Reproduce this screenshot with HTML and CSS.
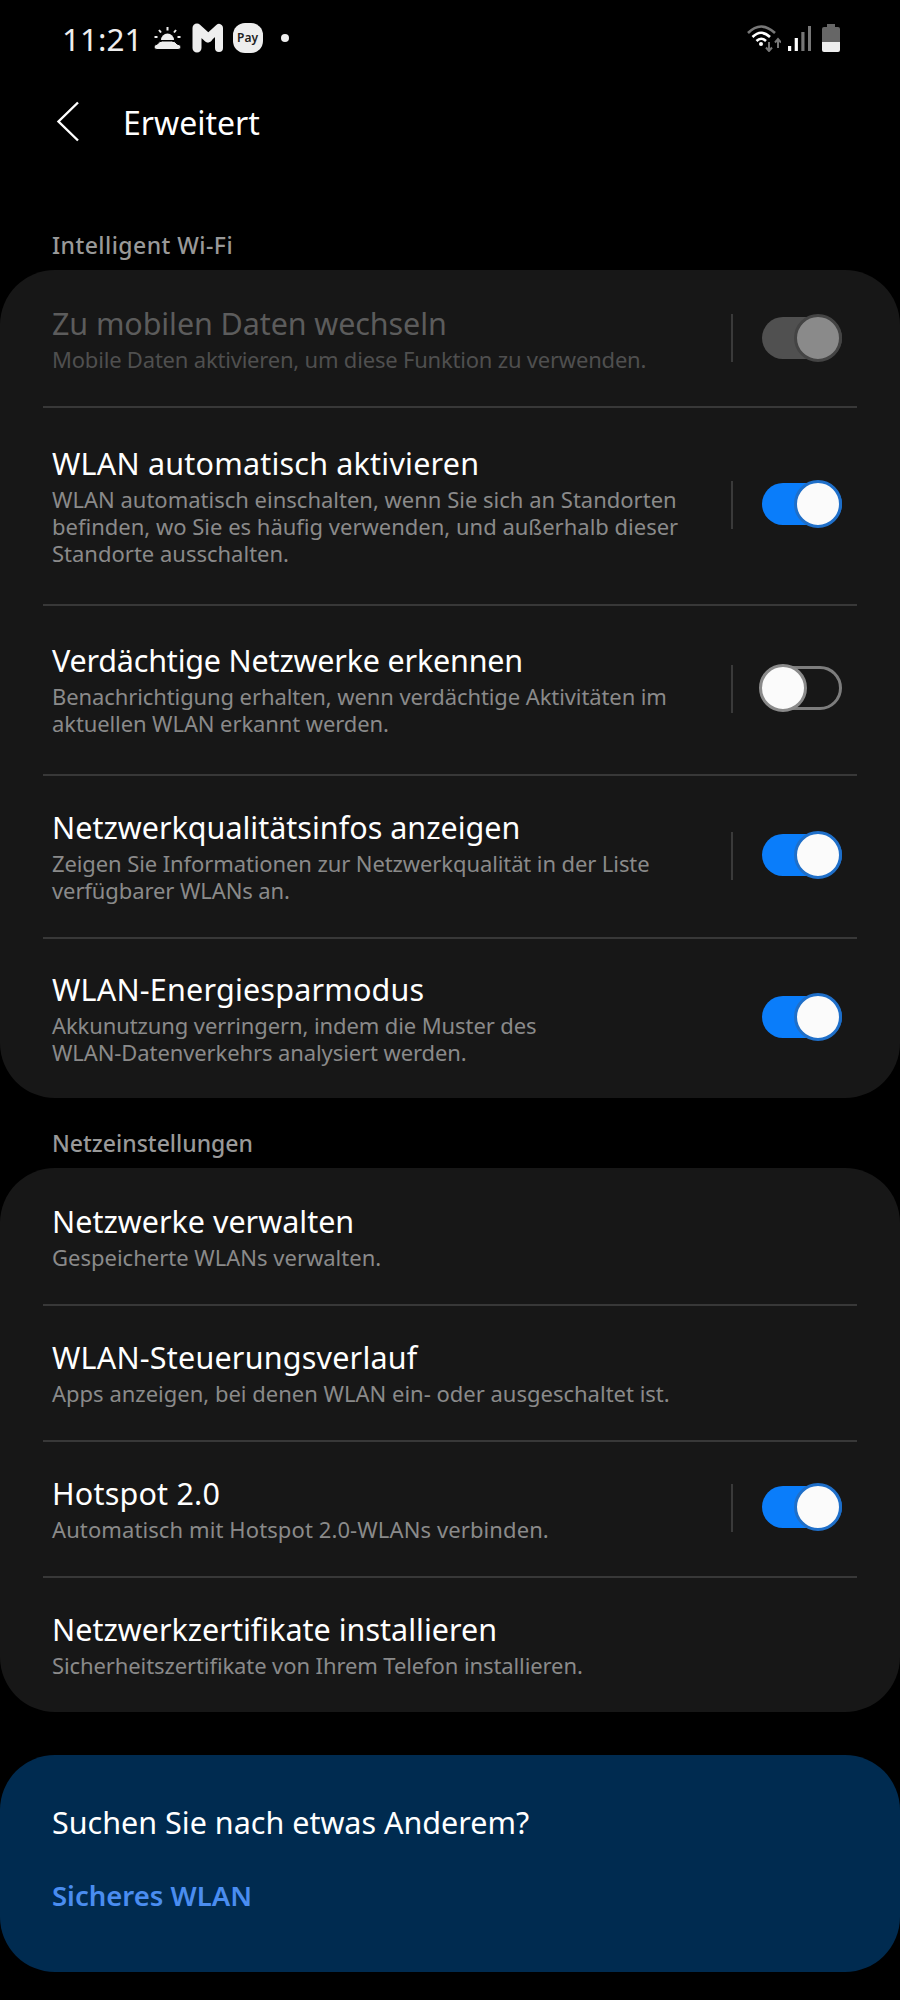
FILE: index.html
```html
<!DOCTYPE html>
<html>
<head>
  <title>Erweitert</title>
  <link rel="stylesheet" href="styles.css">
</head>
<body>

  <!-- Status bar -->
  <div class="statusBar">
    <div class="statusLeft">
      <span class="clock">11:21</span>
      <svg class="weatherIcon" width="27" height="23" viewBox="0 0 27 23">
        <path d="M7 13 a6.500 6.500 0 0 1 13 0z" fill="#eee"/>
        <path d="M13.500 0v3.500M5 3l2 2.500M22 3l-2 2.500M0.500 10h3M26.500 10h-3" stroke="#eee" stroke-width="2" fill="none"/>
        <path d="M3 22.500q-3 0-3-2.500t3.500-3q1.500-3 5-3h9q4 0 5.500 3q4 .5 4 3t-3 2.500z" fill="#eee" stroke="#000" stroke-width="1"/>
      </svg>
      <svg class="gmailIcon" width="32" height="30" viewBox="0 0 32 30">
        <path d="M5 25V5L16 15" fill="none" stroke="#eee" stroke-width="9" stroke-linecap="round" stroke-linejoin="round"/>
        <path d="M16 15L27 5V25" fill="none" stroke="#eee" stroke-width="8" stroke-linecap="round" stroke-linejoin="round"/>
      </svg>
      <span class="payIcon">Pay</span>
      <span class="notifDot"></span>
    </div>
    <div class="statusRight">
      <svg class="wifiIcon" width="34" height="28" viewBox="0 0 34 28">
        <path d="M1 9 Q14 -4 28 9" fill="none" stroke="#777" stroke-width="2.600"/>
        <path d="M5.500 13 Q14 4.500 23 13" fill="none" stroke="#fff" stroke-width="2.600"/>
        <path d="M9.500 17 Q14 12.500 19 17" fill="none" stroke="#fff" stroke-width="2.600"/>
        <circle cx="14" cy="20" r="2" fill="#fff"/>
        <path d="M22 18v9M19 23.500l3 3.500 3-3.500" fill="none" stroke="#777" stroke-width="2"/>
        <path d="M31 24v-9M28 18.500l3-3.500 3 3.500" fill="none" stroke="#777" stroke-width="2"/>
      </svg>
      <svg class="signalIcon" width="23" height="25" viewBox="0 0 23 25">
        <rect x="0" y="20" width="3.200" height="5" fill="#fff"/>
        <rect x="6.700" y="12" width="3.200" height="13" fill="#fff"/>
        <rect x="13.300" y="6" width="3.200" height="19" fill="#777"/>
        <rect x="20" y="0" width="3" height="25" fill="#777"/>
      </svg>
      <svg class="batteryIcon" width="18" height="28" viewBox="0 0 18 28">
        <rect x="5" y="0" width="8" height="4" fill="#666"/>
        <path d="M0 5a2 2 0 0 1 2-2h14a2 2 0 0 1 2 2v14H0z" fill="#666"/>
        <path d="M0 18h18v8a2 2 0 0 1-2 2H2a2 2 0 0 1-2-2z" fill="#eee"/>
      </svg>
    </div>
  </div>

  <!-- Header -->
  <div class="header">
    <svg class="backIcon" width="24" height="42" viewBox="0 0 24 42">
      <path d="M22 1.500 L2.500 20.500 L22 39.500" fill="none" stroke="#fff" stroke-width="2.400"/>
    </svg>
    <span class="pageTitle">Erweitert</span>
  </div>

  <div class="sectionLabel first">Intelligent Wi-Fi</div>
  <div class="card">
    <div class="row disabled">
      <div class="rowText">
        <div class="rowTitle">Zu mobilen Daten wechseln</div>
        <div class="rowDesc">Mobile Daten aktivieren, um diese Funktion zu verwenden.</div>
      </div>
      <div class="rowSep"></div>
      <div class="toggle on grey"><span class="thumb"></span></div>
    </div>
    <div class="row tall">
      <div class="rowText">
        <div class="rowTitle wide">WLAN automatisch aktivieren</div>
        <div class="rowDesc">WLAN automatisch einschalten, wenn Sie sich an Standorten<br>befinden, wo Sie es häufig verwenden, und außerhalb dieser<br>Standorte ausschalten.</div>
      </div>
      <div class="rowSep"></div>
      <div class="toggle on"><span class="thumb"></span></div>
    </div>
    <div class="row mid">
      <div class="rowText">
        <div class="rowTitle tight">Verdächtige Netzwerke erkennen</div>
        <div class="rowDesc tight">Benachrichtigung erhalten, wenn verdächtige Aktivitäten im<br>aktuellen WLAN erkannt werden.</div>
      </div>
      <div class="rowSep"></div>
      <div class="toggle off"><span class="thumb"></span></div>
    </div>
    <div class="row two">
      <div class="rowText">
        <div class="rowTitle">Netzwerkqualitätsinfos anzeigen</div>
        <div class="rowDesc tight">Zeigen Sie Informationen zur Netzwerkqualität in der Liste<br>verfügbarer WLANs an.</div>
      </div>
      <div class="rowSep"></div>
      <div class="toggle on"><span class="thumb"></span></div>
    </div>
    <div class="row two last">
      <div class="rowText">
        <div class="rowTitle wide">WLAN-Energiesparmodus</div>
        <div class="rowDesc tight">Akkunutzung verringern, indem die Muster des<br>WLAN-Datenverkehrs analysiert werden.</div>
      </div>
      <div class="toggle on"><span class="thumb"></span></div>
    </div>
  </div>

  <div class="sectionLabel">Netzeinstellungen</div>
  <div class="card">
    <div class="row">
      <div class="rowText">
        <div class="rowTitle">Netzwerke verwalten</div>
        <div class="rowDesc">Gespeicherte WLANs verwalten.</div>
      </div>
    </div>
    <div class="row">
      <div class="rowText">
        <div class="rowTitle wide">WLAN-Steuerungsverlauf</div>
        <div class="rowDesc">Apps anzeigen, bei denen WLAN ein- oder ausgeschaltet ist.</div>
      </div>
    </div>
    <div class="row">
      <div class="rowText">
        <div class="rowTitle wide">Hotspot 2.0</div>
        <div class="rowDesc wide">Automatisch mit Hotspot 2.0-WLANs verbinden.</div>
      </div>
      <div class="rowSep"></div>
      <div class="toggle on"><span class="thumb"></span></div>
    </div>
    <div class="row">
      <div class="rowText">
        <div class="rowTitle">Netzwerkzertifikate installieren</div>
        <div class="rowDesc tight">Sicherheitszertifikate von Ihrem Telefon installieren.</div>
      </div>
    </div>
  </div>

  <!-- Suggestion card -->
  <div class="suggestCard">
    <div class="suggestTitle">Suchen Sie nach etwas Anderem?</div>
    <div class="suggestLink">Sicheres WLAN</div>
  </div>

</body>
</html>
```

FILE: styles.css
```css
body {
  background: #000;
  color: #fff;
  font-family: "Noto Sans", sans-serif;
  margin: 0;
  overflow: hidden;
}

.statusBar {
  display: flex;
  justify-content: space-between;
  align-items: center;
  height: 76px;
  padding: 0 60px 0 62px;
}

.statusLeft,
.statusRight {
  display: flex;
  align-items: center;
}

.clock {
  font-size: 31.500px;
  color: #eee;
  margin-right: 11px;
}

.gmailIcon {
  margin-left: 11px;
}

.payIcon {
  width: 30px;
  height: 30px;
  margin-left: 9px;
  background: #eee;
  border-radius: 12px;
  color: #222;
  font-size: 12px;
  font-weight: 600;
  text-align: center;
  line-height: 30px;
}

.notifDot {
  width: 8px;
  height: 8px;
  margin-left: 18px;
  background: #eee;
  border-radius: 50%;
}

.signalIcon {
  margin-left: 7px;
}

.batteryIcon {
  margin-left: 11px;
}

.header {
  display: flex;
  align-items: center;
  height: 92px;
  padding-left: 56px;
}

.pageTitle {
  font-size: 32px;
  margin-left: 43px;
}

.sectionLabel {
  font-size: 23px;
  font-weight: 550;
  color: #999;
  padding-left: 52px;
  height: 26px;
  line-height: 26px;
  margin: 32px 0 12px;
}

.sectionLabel.first {
  margin-top: 64px;
  letter-spacing: 0.450px;
}

.card {
  background: #171717;
  border-radius: 55px;
}

.row {
  display: flex;
  align-items: center;
  min-height: 136px;
  box-sizing: border-box;
  padding: 0 58px 0 52px;
  position: relative;
}

.row.tall {
  min-height: 198px;
}

.row.mid {
  min-height: 170px;
}

.row.two {
  min-height: 163px;
}

.row.last {
  min-height: 161px;
}

/* divider between rows, inset from the card edge */
.row + .row::before {
  content: "";
  position: absolute;
  top: 0;
  left: 43px;
  right: 43px;
  height: 2px;
  background: #383838;
}

.rowText {
  flex: 1;
}

.rowTitle {
  font-size: 30.500px;
  line-height: 38px;
  margin-bottom: 4px;
}

.rowTitle.wide {
  letter-spacing: 0.200px;
}

.rowTitle.tight {
  letter-spacing: -0.200px;
}

.rowDesc {
  font-size: 22px;
  line-height: 27px;
  color: #8a8a8a;
}

.rowDesc.tight {
  letter-spacing: -0.100px;
}

.rowDesc.wide {
  letter-spacing: 0.100px;
}

.disabled .rowTitle {
  color: #5c5c5c;
  letter-spacing: -0.100px;
}

.disabled .rowDesc {
  color: #4f4f4f;
  letter-spacing: -0.200px;
}

.rowSep {
  width: 2px;
  height: 48px;
  background: #3a3a3a;
  margin-right: 29px;
}

.toggle {
  width: 80px;
  height: 42px;
  box-sizing: border-box;
  border-radius: 21px;
  position: relative;
  top: -1px;
}

.disabled .toggle {
  top: 0;
}

.toggle.on {
  background: #0a7dfa;
}

.toggle.grey {
  background: #505050;
}

.toggle.off {
  height: 44px;
  border-radius: 22px;
  border: 3px solid #7d7d7d;
}

.thumb {
  position: absolute;
  top: -3px;
  right: 0;
  width: 48px;
  height: 48px;
  box-sizing: border-box;
  border-radius: 50%;
  background: #fbfbfb;
  border: 3px solid #1f6fc9;
}

.toggle.grey .thumb {
  background: #8a8a8a;
  border-color: #444;
}

.toggle.off .thumb {
  top: -5px;
  left: -6px;
  right: auto;
  border-color: #8a8a8a;
}

.suggestCard {
  margin-top: 43px;
  height: 217px;
  box-sizing: border-box;
  background: #002b50;
  border-radius: 55px;
  padding: 48px 52px 0;
}

.suggestTitle {
  font-size: 30.500px;
  line-height: 38px;
}

.suggestLink {
  font-size: 27.500px;
  font-weight: 600;
  line-height: 38px;
  color: #4a8df0;
  margin-top: 36px;
}
```
